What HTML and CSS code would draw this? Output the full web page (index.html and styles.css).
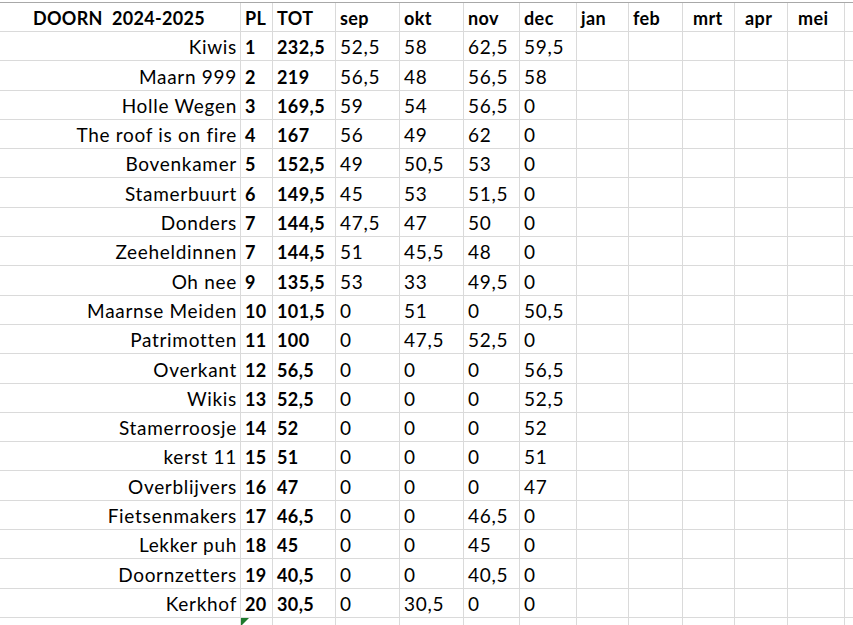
FILE: index.html
```html
<!DOCTYPE html>
<html>
<head>
<meta charset="utf-8">
<link rel="stylesheet" href="styles.css">
</head>
<body>
<div class="sheet">
  <div class="row head">
    <div class="c name title">DOORN&nbsp;&nbsp;2024-2025</div>
    <div class="c b">PL</div><div class="c b">TOT</div>
    <div class="c b">sep</div><div class="c b">okt</div><div class="c b">nov</div><div class="c b">dec</div>
    <div class="c b">jan</div><div class="c b">feb</div><div class="c b ind">mrt</div><div class="c b ind">apr</div><div class="c b ind">mei</div><div class="c"></div>
  </div>
  <div class="row"><div class="c name">Kiwis</div><div class="c b">1</div><div class="c b">232,5</div><div class="c">52,5</div><div class="c">58</div><div class="c">62,5</div><div class="c">59,5</div><div class="c"></div><div class="c"></div><div class="c"></div><div class="c"></div><div class="c"></div><div class="c"></div></div>
  <div class="row"><div class="c name">Maarn 999</div><div class="c b">2</div><div class="c b">219</div><div class="c">56,5</div><div class="c">48</div><div class="c">56,5</div><div class="c">58</div><div class="c"></div><div class="c"></div><div class="c"></div><div class="c"></div><div class="c"></div><div class="c"></div></div>
  <div class="row"><div class="c name">Holle Wegen</div><div class="c b">3</div><div class="c b">169,5</div><div class="c">59</div><div class="c">54</div><div class="c">56,5</div><div class="c">0</div><div class="c"></div><div class="c"></div><div class="c"></div><div class="c"></div><div class="c"></div><div class="c"></div></div>
  <div class="row"><div class="c name">The roof is on fire</div><div class="c b">4</div><div class="c b">167</div><div class="c">56</div><div class="c">49</div><div class="c">62</div><div class="c">0</div><div class="c"></div><div class="c"></div><div class="c"></div><div class="c"></div><div class="c"></div><div class="c"></div></div>
  <div class="row"><div class="c name">Bovenkamer</div><div class="c b">5</div><div class="c b">152,5</div><div class="c">49</div><div class="c">50,5</div><div class="c">53</div><div class="c">0</div><div class="c"></div><div class="c"></div><div class="c"></div><div class="c"></div><div class="c"></div><div class="c"></div></div>
  <div class="row"><div class="c name">Stamerbuurt</div><div class="c b">6</div><div class="c b">149,5</div><div class="c">45</div><div class="c">53</div><div class="c">51,5</div><div class="c">0</div><div class="c"></div><div class="c"></div><div class="c"></div><div class="c"></div><div class="c"></div><div class="c"></div></div>
  <div class="row"><div class="c name">Donders</div><div class="c b">7</div><div class="c b">144,5</div><div class="c">47,5</div><div class="c">47</div><div class="c">50</div><div class="c">0</div><div class="c"></div><div class="c"></div><div class="c"></div><div class="c"></div><div class="c"></div><div class="c"></div></div>
  <div class="row"><div class="c name">Zeeheldinnen</div><div class="c b">7</div><div class="c b">144,5</div><div class="c">51</div><div class="c">45,5</div><div class="c">48</div><div class="c">0</div><div class="c"></div><div class="c"></div><div class="c"></div><div class="c"></div><div class="c"></div><div class="c"></div></div>
  <div class="row"><div class="c name">Oh nee</div><div class="c b">9</div><div class="c b">135,5</div><div class="c">53</div><div class="c">33</div><div class="c">49,5</div><div class="c">0</div><div class="c"></div><div class="c"></div><div class="c"></div><div class="c"></div><div class="c"></div><div class="c"></div></div>
  <div class="row"><div class="c name">Maarnse Meiden</div><div class="c b">10</div><div class="c b">101,5</div><div class="c">0</div><div class="c">51</div><div class="c">0</div><div class="c">50,5</div><div class="c"></div><div class="c"></div><div class="c"></div><div class="c"></div><div class="c"></div><div class="c"></div></div>
  <div class="row"><div class="c name">Patrimotten</div><div class="c b">11</div><div class="c b">100</div><div class="c">0</div><div class="c">47,5</div><div class="c">52,5</div><div class="c">0</div><div class="c"></div><div class="c"></div><div class="c"></div><div class="c"></div><div class="c"></div><div class="c"></div></div>
  <div class="row"><div class="c name">Overkant</div><div class="c b">12</div><div class="c b">56,5</div><div class="c">0</div><div class="c">0</div><div class="c">0</div><div class="c">56,5</div><div class="c"></div><div class="c"></div><div class="c"></div><div class="c"></div><div class="c"></div><div class="c"></div></div>
  <div class="row"><div class="c name">Wikis</div><div class="c b">13</div><div class="c b">52,5</div><div class="c">0</div><div class="c">0</div><div class="c">0</div><div class="c">52,5</div><div class="c"></div><div class="c"></div><div class="c"></div><div class="c"></div><div class="c"></div><div class="c"></div></div>
  <div class="row"><div class="c name">Stamerroosje</div><div class="c b">14</div><div class="c b">52</div><div class="c">0</div><div class="c">0</div><div class="c">0</div><div class="c">52</div><div class="c"></div><div class="c"></div><div class="c"></div><div class="c"></div><div class="c"></div><div class="c"></div></div>
  <div class="row"><div class="c name">kerst 11</div><div class="c b">15</div><div class="c b">51</div><div class="c">0</div><div class="c">0</div><div class="c">0</div><div class="c">51</div><div class="c"></div><div class="c"></div><div class="c"></div><div class="c"></div><div class="c"></div><div class="c"></div></div>
  <div class="row"><div class="c name">Overblijvers</div><div class="c b">16</div><div class="c b">47</div><div class="c">0</div><div class="c">0</div><div class="c">0</div><div class="c">47</div><div class="c"></div><div class="c"></div><div class="c"></div><div class="c"></div><div class="c"></div><div class="c"></div></div>
  <div class="row"><div class="c name">Fietsenmakers</div><div class="c b">17</div><div class="c b">46,5</div><div class="c">0</div><div class="c">0</div><div class="c">46,5</div><div class="c">0</div><div class="c"></div><div class="c"></div><div class="c"></div><div class="c"></div><div class="c"></div><div class="c"></div></div>
  <div class="row"><div class="c name">Lekker puh</div><div class="c b">18</div><div class="c b">45</div><div class="c">0</div><div class="c">0</div><div class="c">45</div><div class="c">0</div><div class="c"></div><div class="c"></div><div class="c"></div><div class="c"></div><div class="c"></div><div class="c"></div></div>
  <div class="row"><div class="c name">Doornzetters</div><div class="c b">19</div><div class="c b">40,5</div><div class="c">0</div><div class="c">0</div><div class="c">40,5</div><div class="c">0</div><div class="c"></div><div class="c"></div><div class="c"></div><div class="c"></div><div class="c"></div><div class="c"></div></div>
  <div class="row"><div class="c name">Kerkhof</div><div class="c b">20</div><div class="c b">30,5</div><div class="c">0</div><div class="c">30,5</div><div class="c">0</div><div class="c">0</div><div class="c"></div><div class="c"></div><div class="c"></div><div class="c"></div><div class="c"></div><div class="c"></div></div>
  <div class="row"><div class="c name"></div><div class="c flag"></div><div class="c"></div><div class="c"></div><div class="c"></div><div class="c"></div><div class="c"></div><div class="c"></div><div class="c"></div><div class="c"></div><div class="c"></div><div class="c"></div><div class="c"></div></div>
</div>
</body>
</html>
```

FILE: styles.css
```css
html, body {
  margin: 0;
  padding: 0;
  background: #ffffff;
  overflow: hidden;
}
body {
  font-family: Lato, "Liberation Sans", sans-serif;
  font-size: 19px;
  letter-spacing: 0.7px;
  color: #000000;
}
.sheet {
  display: flex;
  flex-direction: column;
  padding-top: 2px;
}
.row {
  display: grid;
  grid-template-columns: 241px 32px 63px 64px 64px 56px 57px 52px 54px 52px 53px 57px 1fr;
  height: 29.3px;
  flex: none;
}
.row.head {
  height: 29px;
  border-top: 1px solid #a8a8a8;
}
.c {
  box-sizing: border-box;
  border-right: 1px solid #dadada;
  border-bottom: 1px solid #dadada;
  display: flex;
  align-items: flex-end;
  padding: 0 4px 3px 4px;
  line-height: 20px;
  white-space: nowrap;
  position: relative;
}
.c.name {
  justify-content: flex-end;
  padding-right: 3px;
}
.c.title {
  justify-content: center;
  font-weight: bold;
  font-size: 18px;
  letter-spacing: 0.3px;
  padding-left: 1px;
}
.b {
  font-weight: bold;
  font-size: 18px;
  letter-spacing: 0.4px;
}
.head .ind {
  padding-left: 10px;
}
.flag::before {
  content: "";
  position: absolute;
  left: 0;
  top: 0;
  width: 0;
  height: 0;
  border-top: 8px solid #1e7a2e;
  border-right: 8px solid transparent;
}
```
